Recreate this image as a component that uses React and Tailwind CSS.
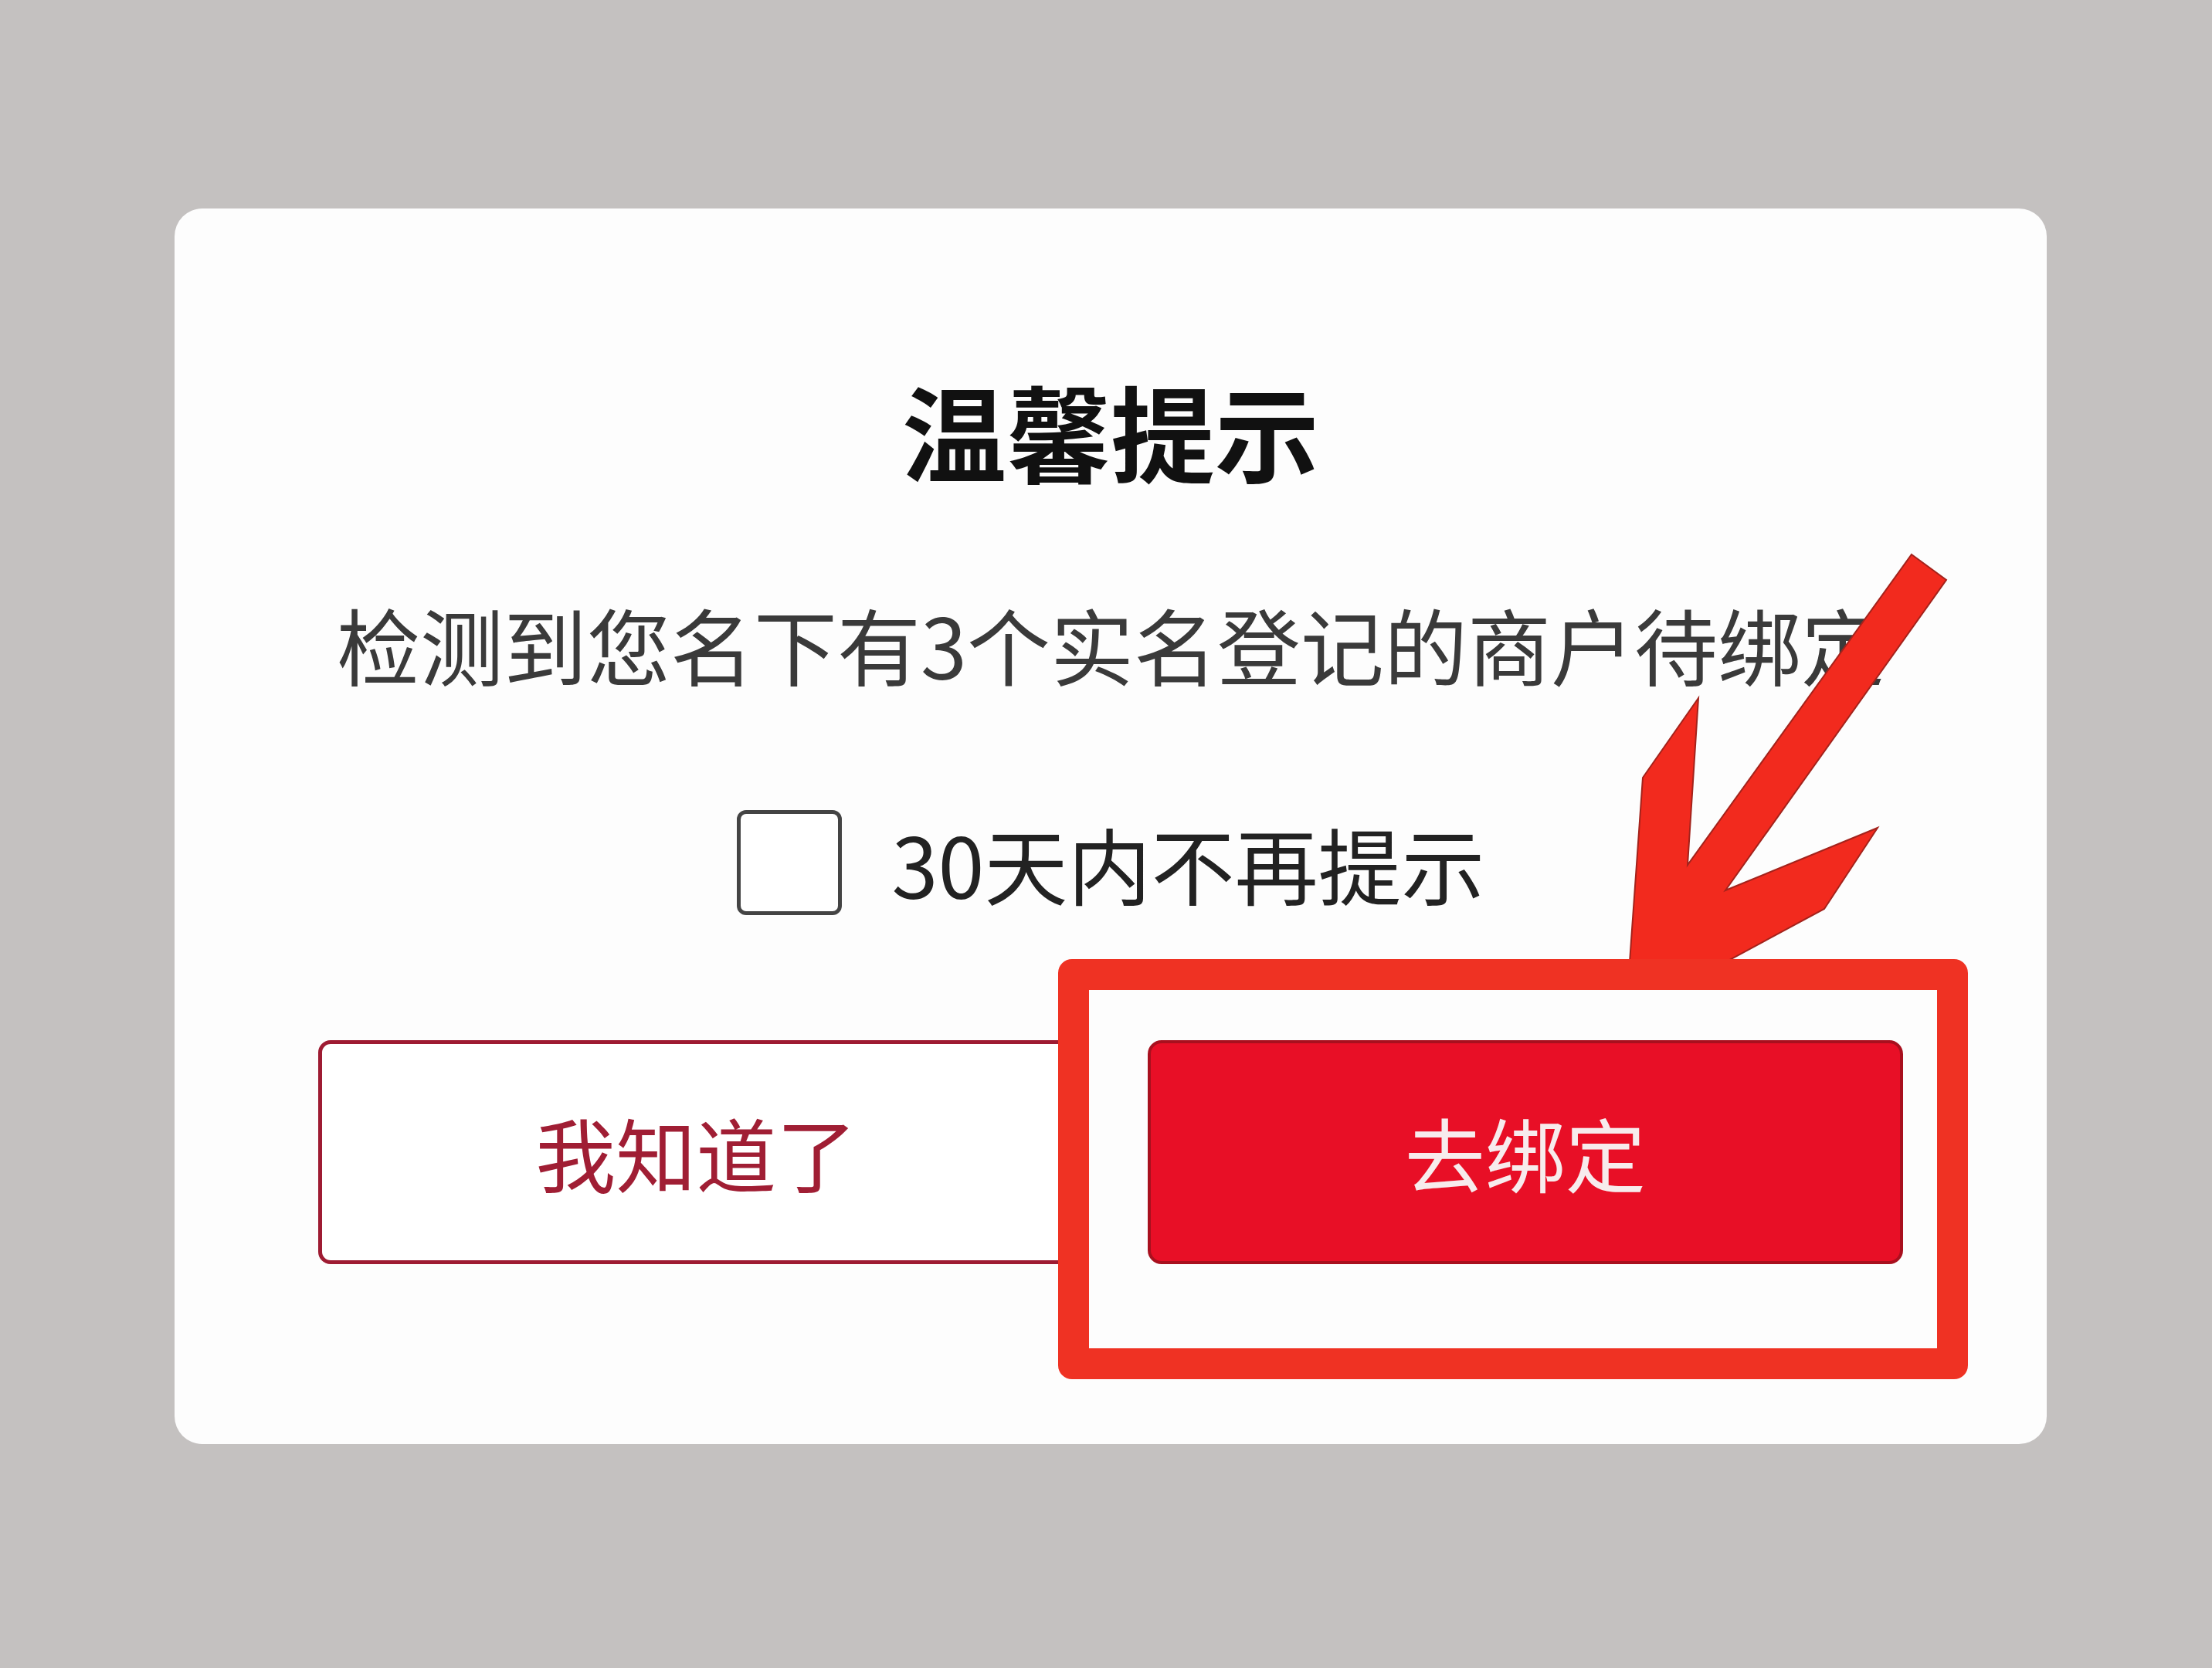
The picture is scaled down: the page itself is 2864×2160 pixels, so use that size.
import React from 'react';

const Arrow = () => (
    <svg
        className="absolute left-0 top-0 pointer-events-none"
        width="2424"
        height="1600"
        viewBox="0 0 2424 1600"
    >
        <polygon
            points="2249,448 2294,481 2008,883 2205,802 2136,907 1982,990 1883,990 1901,737 1973,634 1959,850"
            fill="#f22a1e"
            stroke="#a3231c"
            strokeWidth="2"
            strokeLinejoin="miter"
        />
    </svg>
);

const App = () => {
    return (
        <div className="w-[2864px] h-[2160px] bg-[#c4c1c0] pt-[270px] pl-[226px] font-['Noto_Sans_CJK_SC','Noto_Sans',sans-serif]">
            {/* DIALOG */}
            <div className="relative w-[2424px] h-[1600px] bg-[#fdfdfd] rounded-[36px] pt-[219px] px-[186px] flex flex-col items-center">

                {/* TITLE */}
                <h2 className="text-[135px] leading-none font-bold text-[#111111]">
                    温馨提示
                </h2>

                {/* MESSAGE */}
                <p className="mt-[155px] w-full text-center whitespace-nowrap text-[108px] leading-none text-[#3a3a3a]">
                    检测到您名下有3个实名登记的商户待绑定
                </p>

                {/* CHECKBOX */}
                <label className="mt-[162px] flex items-center gap-[65px]">
                    <span className="w-[136px] h-[136px] rounded-[12px] border-[5px] border-[#444444] bg-white"></span>
                    <span className="text-[108px] leading-none text-[#222222]">30天内不再提示</span>
                </label>

                {/* BUTTONS */}
                <div className="mt-[162px] w-full flex gap-[95px]">
                    <button className="w-[979px] h-[290px] rounded-[16px] border-[5px] border-[#9e1b32] bg-white text-[104px] leading-none text-[#a01e34]">
                        我知道了
                    </button>
                    <button className="w-[979px] h-[290px] rounded-[18px] border-[4px] border-[#a8101e] bg-[#e80f26] text-[104px] leading-none text-[#f7eced]">
                        去绑定
                    </button>
                </div>

                {/* HIGHLIGHT */}
                <Arrow />
                <div className="absolute left-[1144px] top-[972px] w-[1178px] h-[544px] rounded-[18px] border-[40px] border-[#ef3223] pointer-events-none"></div>
            </div>
        </div>
    );
};

export default App;
